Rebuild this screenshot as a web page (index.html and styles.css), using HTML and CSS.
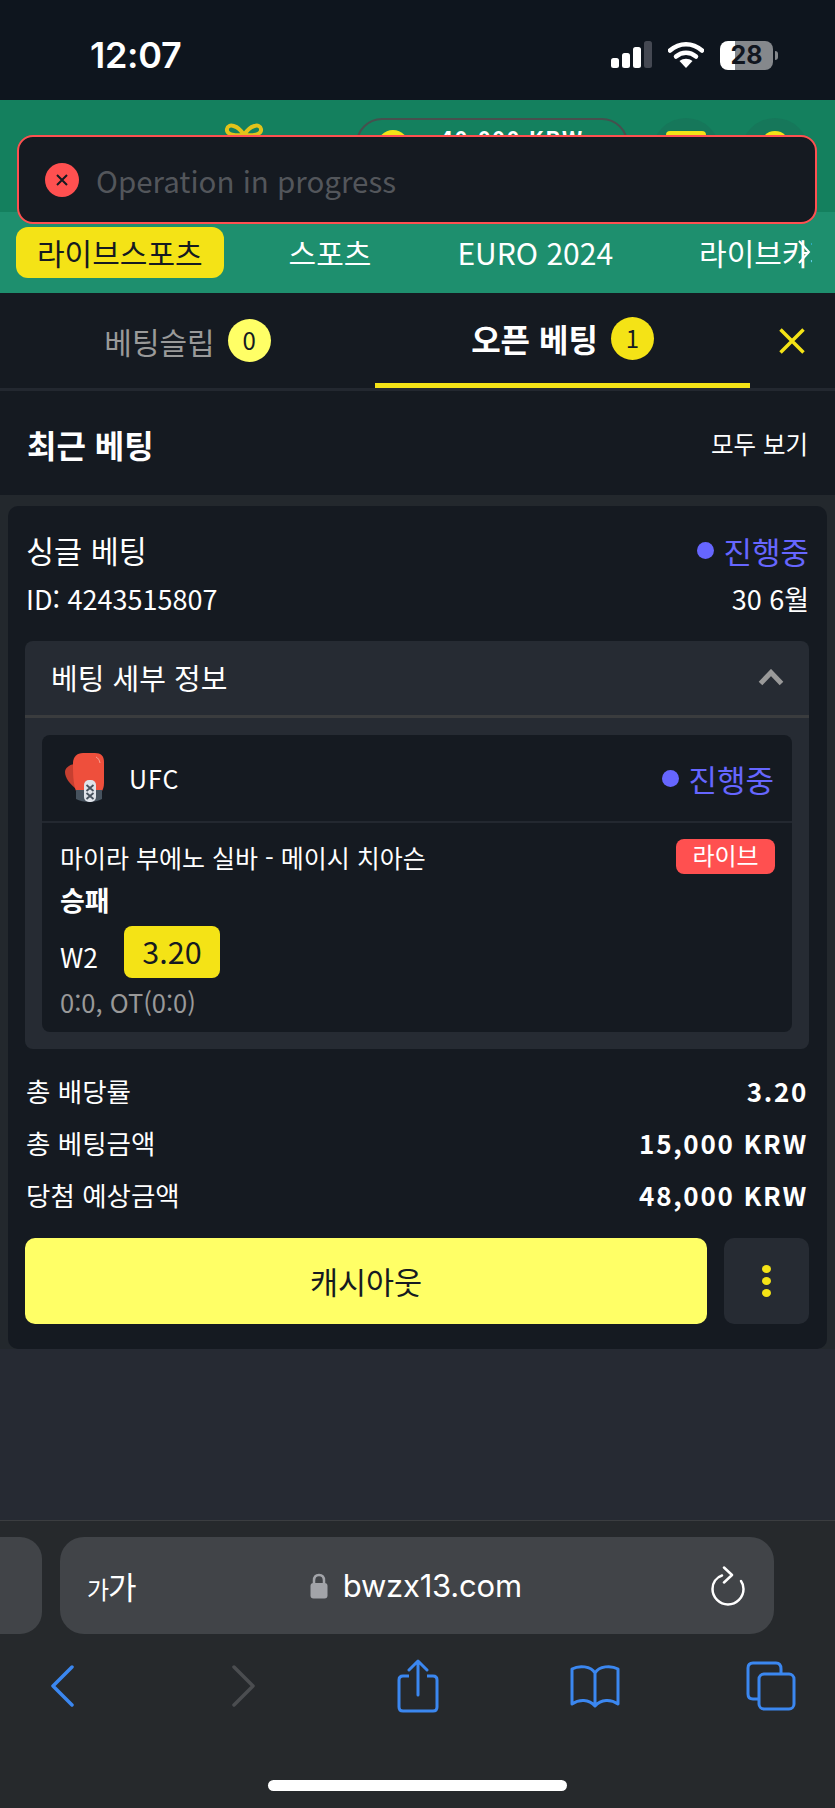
FILE: index.html
```html
<!DOCTYPE html>
<html lang="ko">
<head>
    <meta charset="UTF-8">
    <meta name="viewport" content="width=device-width, initial-scale=1.0">
    <title>오픈 베팅</title>
    <link rel="stylesheet" href="styles.css">
</head>
<body>
    <div class="screen">
        <!-- status bar -->
        <div class="status-bar">
            <span class="clock">12:07</span>
            <div class="status-icons">
                <svg class="signal" width="42" height="28" viewBox="0 0 42 28">
                    <rect x="0" y="17" width="8" height="10" rx="2.5" fill="#fff"/>
                    <rect x="11" y="12" width="8" height="15" rx="2.5" fill="#fff"/>
                    <rect x="22" y="6" width="8" height="21" rx="2.5" fill="#fff"/>
                    <rect x="33" y="0" width="8" height="27" rx="2.5" fill="#444852"/>
                </svg>
                <svg class="wifi" width="36" height="28" viewBox="0 0 36 28">
                    <path d="M2 9.5C11.500 1 24.500 1 34 9.500" fill="none" stroke="#fff" stroke-width="4.500" stroke-linecap="round"/>
                    <path d="M8 15.500C14 10.500 22 10.500 28 15.500" fill="none" stroke="#fff" stroke-width="4.500" stroke-linecap="round"/>
                    <path d="M18 27L11.500 20C15.500 17 20.500 17 24.500 20Z" fill="#fff"/>
                </svg>
                <div class="battery">
                    <div class="battery-body"><span>28</span></div>
                    <div class="battery-tip"></div>
                </div>
            </div>
        </div>

        <!-- site header, mostly under the toast -->
        <header class="site-header">
            <svg class="gift" width="42" height="30" viewBox="0 0 42 30">
                <path d="M21 13C15 3 5 1 4 7C3 13 13 14 21 13C29 14 39 13 38 7C37 1 27 3 21 13Z" fill="none" stroke="#e2c31a" stroke-width="4"/>
                <rect x="2" y="13" width="38" height="17" fill="#e2c31a"/>
            </svg>
            <div class="balance">
                <span class="coin"></span>
                <span class="balance-text">40,000 KRW</span>
            </div>
            <div class="round-btn"><span class="round-square"></span></div>
            <div class="round-btn"><span class="round-coin"></span></div>
        </header>

        <nav class="main-nav">
            <div class="nav-scroll">
                <a class="nav-item active">라이브스포츠</a>
                <a class="nav-item">스포츠</a>
                <a class="nav-item">EURO 2024</a>
                <a class="nav-item">라이브카지노</a>
            </div>
            <svg class="nav-arrow" width="14" height="26" viewBox="0 0 14 26">
                <path d="M2 2L12 13L2 24" fill="none" stroke="#fff" stroke-width="2"/>
            </svg>
        </nav>

        <!-- toast -->
        <div class="toast">
            <span class="toast-icon">
                <svg width="14" height="14" viewBox="0 0 14 14">
                    <path d="M2 2L12 12M12 2L2 12" stroke="#151a21" stroke-width="2"/>
                </svg>
            </span>
            <span class="toast-text">Operation in progress</span>
        </div>

        <!-- tabs -->
        <div class="tabs">
            <div class="tab">베팅슬립 <span class="tab-count light">0</span></div>
            <div class="tab active">오픈 베팅 <span class="tab-count">1</span></div>
            <div class="tab-close">
                <svg width="26" height="26" viewBox="0 0 26 26">
                    <path d="M1.500 1.500L24.500 24.500M24.500 1.500L1.500 24.500" stroke="#f4e316" stroke-width="3.500"/>
                </svg>
            </div>
        </div>

        <div class="section-head">
            <h2>최근 베팅</h2>
            <a>모두 보기</a>
        </div>

        <div class="content">
            <div class="bet-card">
                <div class="bet-top">
                    <div class="bet-title">싱글 베팅</div>
                    <div class="status-live"><i></i>진행중</div>
                </div>
                <div class="bet-sub">
                    <div>ID: 4243515807</div>
                    <div>30 6월</div>
                </div>

                <div class="details">
                    <div class="details-head">
                        <span>베팅 세부 정보</span>
                        <svg width="26" height="17" viewBox="0 0 26 17">
                            <path d="M2.500 14.500L13 3.500L23.500 14.500" fill="none" stroke="#999" stroke-width="5"/>
                        </svg>
                    </div>
                    <div class="event">
                        <div class="event-head">
                            <div class="event-sport">
                                <svg class="glove" width="40" height="50" viewBox="0 0 40 50">
                                    <path d="M9 11C4 12 0 15 0 19C0 25 5 31 11 36Z" fill="#c63f30"/>
                                    <path d="M11 38C8 30 8 20 8 10C8 4 12 0 18 0H30C36 0 39 3 39 9V30C39 34 38 36 37 38Z" fill="#ee4f3c"/>
                                    <path d="M31 4C33 5 34.500 7 35 10" fill="none" stroke="#f7a195" stroke-width="1"/>
                                    <path d="M11 37H37V46C30 50 18 50 11 46Z" fill="#46525e"/>
                                    <rect x="19" y="27" width="12" height="22" rx="5" fill="#dfe3ea"/>
                                    <path d="M21.500 32L28.500 38M28.500 32L21.500 38M21.500 40L28.500 46M28.500 40L21.500 46" stroke="#46525e" stroke-width="1.800"/>
                                </svg>
                                <span>UFC</span>
                            </div>
                            <div class="status-live"><i></i>진행중</div>
                        </div>
                        <div class="event-body">
                            <div class="event-row">
                                <span>마이라 부에노 실바 - 메이시 치아슨</span>
                                <span class="live-badge">라이브</span>
                            </div>
                            <div class="market">승패</div>
                            <div class="pick">
                                <span>W2</span>
                                <span class="odds">3.20</span>
                            </div>
                            <div class="score">0:0, OT(0:0)</div>
                        </div>
                    </div>
                </div>

                <div class="summary">
                    <div class="summary-row"><span>총 배당률</span><b>3.20</b></div>
                    <div class="summary-row"><span>총 베팅금액</span><b>15,000 KRW</b></div>
                    <div class="summary-row"><span>당첨 예상금액</span><b>48,000 KRW</b></div>
                </div>

                <div class="actions">
                    <button class="cashout">캐시아웃</button>
                    <button class="more"><i></i><i></i><i></i></button>
                </div>
            </div>
        </div>

        <!-- safari bar -->
        <div class="browser-bar">
            <div class="url-row">
                <div class="prev-tab"></div>
                <div class="url-box">
                    <span class="aa"><small>가</small>가</span>
                    <div class="url">
                        <svg width="18" height="26" viewBox="0 0 18 26">
                            <path d="M4 11V7.500C4 4 6 2 9 2C12 2 14 4 14 7.500V11" fill="none" stroke="#a2a4a9" stroke-width="2.500"/>
                            <rect x="0.500" y="10" width="17" height="15.500" rx="3" fill="#a2a4a9"/>
                        </svg>
                        <span>bwzx13.com</span>
                    </div>
                    <svg class="reload" width="34" height="40" viewBox="0 0 34 40">
                        <path d="M11 9.500C5 11.500 1.500 17 1.500 23C1.500 31.500 8.500 38.500 17 38.500C25.500 38.500 32.500 31.500 32.500 23C32.500 19.500 31.500 17 30 15" fill="none" stroke="#fff" stroke-width="2.500" stroke-linecap="round"/>
                        <path d="M13 1.500L21 9L13 16.500" fill="none" stroke="#fff" stroke-width="2.500" stroke-linecap="round" stroke-linejoin="round"/>
                    </svg>
                </div>
            </div>
            <div class="toolbar">
                <svg class="tool-back" width="24" height="42" viewBox="0 0 24 42">
                    <path d="M22 2L3 21L22 40" fill="none" stroke="#3b87f0" stroke-width="3.500" stroke-linecap="round" stroke-linejoin="round"/>
                </svg>
                <svg class="tool-forward" width="24" height="42" viewBox="0 0 24 42">
                    <path d="M2 2L21 21L2 40" fill="none" stroke="#4b4d50" stroke-width="3.500" stroke-linecap="round" stroke-linejoin="round"/>
                </svg>
                <svg class="tool-share" width="42" height="54" viewBox="0 0 42 54">
                    <path d="M12 17H6C3.500 17 2 18.500 2 21V48C2 50.500 3.500 52 6 52H36C38.500 52 40 50.500 40 48V21C40 18.500 38.500 17 36 17H30" fill="none" stroke="#3b87f0" stroke-width="3"/>
                    <path d="M21 36V3M12 11L21 2L30 11" fill="none" stroke="#3b87f0" stroke-width="3" stroke-linecap="round" stroke-linejoin="round"/>
                </svg>
                <svg class="tool-book" width="52" height="44" viewBox="0 0 52 44">
                    <path d="M26 9C22 2 10 1 3 5V40C10 35 20 35 26 42C32 35 42 35 49 40V5C42 1 30 2 26 9V42" fill="none" stroke="#3b87f0" stroke-width="3" stroke-linejoin="round"/>
                </svg>
                <svg class="tool-tabs" width="50" height="50" viewBox="0 0 50 50">
                    <path d="M12 38H7C3.500 38 2 36 2 33V7C2 4 3.500 2 7 2H30C33.500 2 35 4 35 8V12" fill="none" stroke="#3b87f0" stroke-width="3"/>
                    <rect x="13" y="13" width="35" height="35" rx="5" fill="none" stroke="#3b87f0" stroke-width="3"/>
                </svg>
            </div>
            <div class="home-indicator"></div>
        </div>
    </div>
</body>
</html>
```

FILE: styles.css
```css
* {
    margin: 0;
    padding: 0;
    box-sizing: border-box;
}

body {
    background: #262a33;
    color: #fff;
    font-family: "Noto Sans CJK KR", "Noto Sans", sans-serif;
}

.screen {
    position: relative;
    width: 835px;
    height: 1808px;
    display: flex;
    flex-direction: column;
    overflow: hidden;
}

/* status bar */
.status-bar {
    height: 100px;
    flex: none;
    background: #0e151e;
    display: flex;
    justify-content: space-between;
    align-items: center;
    padding: 10px 57px 0 90px;
    font-family: Inter, sans-serif;
}

.clock {
    font-size: 36px;
    font-weight: 600;
    letter-spacing: -0.3px;
}

.status-icons {
    display: flex;
    align-items: center;
}

.signal {
    margin-right: 15px;
}

.wifi {
    margin-right: 16px;
}

.battery {
    display: flex;
    align-items: center;
    gap: 2px;
}

.battery-body {
    width: 53px;
    height: 29px;
    border-radius: 8px;
    background: linear-gradient(90deg, #fff 0, #fff 15px, #85888c 15px);
    color: #11161f;
    font-size: 25px;
    font-weight: 700;
    text-align: center;
    line-height: 29px;
}

.battery-tip {
    width: 3px;
    height: 9px;
    border-radius: 0 3px 3px 0;
    background: #85888c;
}

/* site header */
.site-header {
    height: 112px;
    flex: none;
    background: #14805e;
    display: flex;
    align-items: flex-start;
    padding: 18px 0 0 223px;
}

.site-header > * {
    flex: none;
}

.gift {
    margin-top: 4px;
    margin-right: 91px;
}

.balance {
    width: 272px;
    height: 80px;
    border: 2px solid #46504e;
    border-radius: 26px;
    display: flex;
    padding: 10px 0 0 19px;
    margin-right: 24px;
}

.coin {
    width: 32px;
    height: 32px;
    border-radius: 50%;
    background: #f4e316;
    margin-right: 31px;
}

.balance-text {
    font-size: 22px;
    font-weight: 700;
    letter-spacing: 1.5px;
    line-height: 28px;
    margin-top: -6px;
}

.round-btn {
    width: 68px;
    height: 68px;
    border-radius: 50%;
    background: #16775a;
    display: flex;
    justify-content: center;
    padding-top: 13px;
    margin-right: 21px;
}

.round-square {
    width: 40px;
    height: 30px;
    border-radius: 4px;
    background: #f4e316;
}

.round-coin {
    width: 30px;
    height: 30px;
    border-radius: 50%;
    background: #f4e316;
}

/* main nav */
.main-nav {
    position: relative;
    height: 81px;
    flex: none;
    background: #1e8f6e;
    padding: 15px 23px 0 16px;
}

.nav-scroll {
    display: flex;
    gap: 44px;
    overflow: hidden;
}

.nav-item {
    flex: none;
    height: 51px;
    padding: 0 21px;
    border-radius: 12px;
    font-size: 30px;
    line-height: 50px;
    white-space: nowrap;
}

.nav-item.active {
    background: #f4e316;
    color: #151a21;
}

.nav-arrow {
    position: absolute;
    top: 27px;
    right: 24px;
}

/* toast */
.toast {
    position: absolute;
    left: 17px;
    top: 135px;
    width: 800px;
    height: 89px;
    background: #151a21;
    border: 2px solid #ff5050;
    border-radius: 16px;
    display: flex;
    align-items: center;
    padding: 0 0 0 26px;
    gap: 17px;
}

.toast-icon {
    width: 34px;
    height: 34px;
    border-radius: 50%;
    background: #ff5050;
    display: flex;
    align-items: center;
    justify-content: center;
}

.toast-text {
    font-size: 29.500px;
    color: #53565b;
}

/* tabs */
.tabs {
    height: 98px;
    flex: none;
    background: #151a21;
    border-bottom: 3px solid #232830;
    display: flex;
}

.tab {
    width: 375px;
    display: flex;
    align-items: center;
    justify-content: center;
    gap: 13px;
    font-size: 30px;
    color: #9a9a9a;
}

.tab.active {
    color: #fff;
    font-size: 32px;
    font-weight: 700;
    border-bottom: 5px solid #f4e316;
}

.tab-count {
    width: 43px;
    height: 43px;
    border-radius: 50%;
    background: #f4e316;
    color: #151a21;
    font-size: 24px;
    font-weight: 400;
    text-align: center;
    line-height: 42px;
}

.tab-count.light {
    background: #ffff66;
}

.tab-close {
    flex: 1;
    display: flex;
    align-items: center;
    justify-content: center;
    padding-right: 2px;
}

/* recent bets */
.section-head {
    height: 104px;
    flex: none;
    background: #151a21;
    display: flex;
    justify-content: space-between;
    align-items: center;
    padding: 1px 27px 0;
}

.section-head h2 {
    font-size: 32px;
    font-weight: 700;
}

.section-head a {
    font-size: 24.500px;
}

.content {
    height: 854px;
    flex: none;
    background: #23282d;
    padding: 11px 8px 0;
}

.bet-card {
    height: 843px;
    background: #151a21;
    border-radius: 10px;
    padding: 24px 18px 0 17px;
}

.bet-top,
.bet-sub {
    display: flex;
    justify-content: space-between;
    align-items: center;
}

.bet-top {
    height: 40px;
}

.bet-title {
    padding-left: 1px;
    font-size: 30.500px;
}

.bet-sub {
    height: 40px;
    margin-top: 8px;
    padding-left: 1px;
    font-size: 27px;
}

.status-live {
    display: flex;
    align-items: center;
    gap: 9px;
    font-size: 31px;
    color: #6666ff;
}

.status-live i {
    width: 17px;
    height: 17px;
    border-radius: 50%;
    background: #6666ff;
}

.details {
    margin-top: 23px;
    height: 408px;
    background: #262b33;
    border-radius: 8px;
    padding-bottom: 17px;
}

.details-head {
    height: 77px;
    border-bottom: 3px solid #3a3c3e;
    display: flex;
    justify-content: space-between;
    align-items: center;
    padding: 0 25px 2px 26px;
    font-size: 29px;
}

.event {
    margin: 17px 17px 0;
    height: 297px;
    background: #151a21;
    border-radius: 8px;
}

.event-head {
    height: 88px;
    border-bottom: 2px solid #232830;
    display: flex;
    justify-content: space-between;
    align-items: center;
    padding: 0 18px 0 23px;
}

.event-sport {
    display: flex;
    align-items: center;
    gap: 24px;
    font-size: 25px;
    letter-spacing: 1px;
}

.event-body {
    padding: 16px 17px 0 18px;
}

.event-row {
    display: flex;
    justify-content: space-between;
    align-items: flex-start;
    font-size: 25px;
    height: 35px;
}

.live-badge {
    width: 99px;
    height: 35px;
    border-radius: 8px;
    background: #ff5050;
    font-size: 24px;
    text-align: center;
    line-height: 32px;
}

.market {
    margin-top: 6px;
    font-size: 27px;
    font-weight: 700;
    line-height: 40px;
}

.pick {
    display: flex;
    align-items: flex-end;
    gap: 26px;
    margin-top: 6px;
    font-size: 26.500px;
}

.pick span:first-child {
    line-height: 42px;
}

.odds {
    width: 96px;
    height: 52px;
    border-radius: 8px;
    background: #f4e316;
    color: #151a21;
    font-size: 30.500px;
    text-align: center;
    line-height: 50px;
}

.score {
    margin-top: 6px;
    font-size: 25.500px;
    color: #999;
    line-height: 36px;
}

.summary {
    margin-top: 15px;
}

.summary-row {
    height: 52px;
    display: flex;
    justify-content: space-between;
    align-items: center;
    padding: 0 1px 0 1px;
    font-size: 26.500px;
}

.summary-row b {
    font-size: 26px;
    font-weight: 700;
    letter-spacing: 1.700px;
}

.actions {
    display: flex;
    gap: 17px;
    margin-top: 18px;
}

.actions button {
    height: 86px;
    border: none;
    border-radius: 10px;
    font-family: inherit;
    cursor: pointer;
}

.cashout {
    width: 682px;
    background: #ffff66;
    color: #151a21;
    font-size: 30.500px;
}

.more {
    width: 85px;
    background: #262b33;
    display: flex;
    flex-direction: column;
    align-items: center;
    justify-content: center;
    gap: 4px;
}

.more i {
    width: 9px;
    height: 8px;
    border-radius: 50%;
    background: #f4e316;
}

/* browser bar */
.browser-bar {
    margin-top: 171px;
    flex: 1;
    background: #26292c;
    border-top: 1px solid #3b3d40;
    font-family: Inter, sans-serif;
    position: relative;
}

.url-row {
    display: flex;
    gap: 18px;
    margin-top: 16px;
    height: 97px;
}

.prev-tab {
    width: 42px;
    background: #414448;
    border-radius: 0 22px 22px 0;
}

.url-box {
    width: 714px;
    background: #414448;
    border-radius: 24px;
    position: relative;
    display: flex;
    align-items: center;
    justify-content: space-between;
    padding: 0 29px 0 27px;
}

.aa {
    font-family: "Noto Sans CJK KR", sans-serif;
    font-size: 31px;
    letter-spacing: -1px;
}

.aa small {
    font-size: 24px;
}

.url {
    display: flex;
    align-items: center;
    gap: 15px;
    margin-right: 15px;
    font-size: 31px;
    font-weight: 400;
    letter-spacing: -0.2px;
}

.toolbar {
    display: flex;
    align-items: center;
    margin-top: 24px;
    padding-left: 50px;
    height: 56px;
}

.tool-forward {
    margin-left: 158px;
}

.tool-share {
    margin-left: 141px;
}

.tool-book {
    margin-left: 130px;
}

.tool-tabs {
    margin-left: 125px;
}

.home-indicator {
    position: absolute;
    left: 268px;
    bottom: 17px;
    width: 299px;
    height: 11px;
    border-radius: 6px;
    background: #fff;
}
```
